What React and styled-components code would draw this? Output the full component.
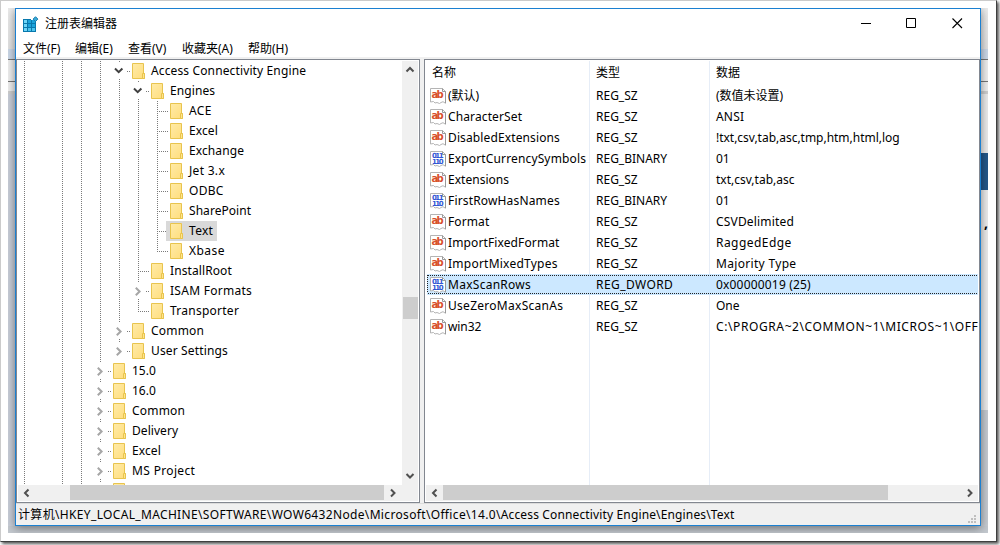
import React from "react";
import styled, { createGlobalStyle, css } from "styled-components";

const GlobalStyle = createGlobalStyle`
  * {
    box-sizing: border-box;
  }
  body {
    margin: 0;
    height: 545px;
    background: #fff;
    overflow: hidden;
    color: #000;
    font-family: "Noto Sans", "Noto Sans CJK SC", sans-serif;
    font-size: 12px;
    line-height: 20px;
  }
  svg {
    display: block;
    flex: none;
  }
`;

const Page = styled.div`
  height: 545px;
  overflow: hidden;
`;

const Frame = styled.div`
  width: 997px;
  height: 542px;
  padding: 7px 8px 8px 7px;
  border: 1px solid #cbcbcb;
  border-right-color: #3f3f3f;
  border-bottom-color: #3f3f3f;
  background: #fff;
  box-shadow: 2px 2px 3px #555;
`;

const Desktop = styled.div`
  display: grid;
  grid-template-columns: 7px 966px 7px;
  grid-template-rows: 518px 7px;
  width: 980px;
  height: 525px;
  overflow: hidden;
  background: #c3c8ce;
`;

const Strip = styled.div`
  display: flex;
  flex-direction: column;
  overflow: hidden;
`;

const Band = styled.div`
  flex: none;
  height: ${(p) => p.$h}px;
  background: ${(p) => p.$color};
  font-size: 14px;
  font-weight: 700;
  line-height: 14px;
  padding-left: 3px;
`;

const Window = styled.div`
  position: relative;
  display: flex;
  flex-direction: column;
  border: 1px solid #1b80d1;
  background: #fff;
  box-shadow: 0 2px 9px rgba(0, 0, 0, 0.45);
`;

const TitleBar = styled.div`
  display: flex;
  align-items: center;
  height: 29px;
  padding-left: 7px;
`;

const Title = styled.div`
  flex: 1;
  padding-left: 6px;
`;

const Controls = styled.div`
  display: flex;
  gap: 35px;
  padding-right: 17px;
`;

const MenuBar = styled.div`
  display: flex;
  height: 21px;
  padding: 1px 0 0 7px;
  border-bottom: 2px solid #f0f0f0;
`;

const MenuItem = styled.div`
  width: ${(p) => p.$w}px;
  line-height: 20px;
  white-space: nowrap;
`;

const Body = styled.div`
  display: flex;
  gap: 4px;
  height: 444px;
  background: #f0f0f0;
`;

const Pane = styled.div`
  display: flex;
  flex-direction: column;
  flex: none;
  width: ${(p) => p.$w}px;
  padding: 1px;
  border: 1px solid #828790;
  background: #fff;
  overflow: hidden;
`;

const TreeArea = styled.div`
  display: flex;
  height: 424px;
`;

const Tree = styled.div`
  flex: 1;
  overflow: hidden;
`;

const TreeRow = styled.div`
  display: flex;
  height: 20px;
`;

const TreeLabel = styled.div`
  display: flex;
  align-items: center;
  gap: 6px;
  margin-left: -4px;
  padding: 0 4px;
  letter-spacing: ${(p) => p.$ls ?? 0.1}px;
  white-space: nowrap;
  ${(p) =>
    p.$selected &&
    css`
      background: #d9d9d9;
    `}
`;

const VScroll = styled.div`
  display: flex;
  flex-direction: column;
  justify-content: space-between;
  align-items: center;
  width: 16px;
  padding: 4px 0;
  background: #f0f0f0;
`;

const VThumb = styled.div`
  width: 15px;
  height: 22px;
  margin-top: 202px;
  margin-bottom: 132px;
  background: #cdcdcd;
`;

const HScroll = styled.div`
  display: flex;
  height: 16px;
  background: #f0f0f0;
`;

const HButton = styled.div`
  display: flex;
  align-items: center;
  justify-content: center;
  width: 17px;
  height: 15px;
`;

const HThumb = styled.div`
  width: ${(p) => p.$w}px;
  height: 15px;
  margin-left: ${(p) => p.$left}px;
  margin-right: ${(p) => p.$right}px;
  background: #cdcdcd;
`;

const ListArea = styled.div`
  height: 424px;
  overflow: hidden;
  background: linear-gradient(#e6edf7, #e6edf7) 163px 0 / 1px 100% no-repeat,
    linear-gradient(#e6edf7, #e6edf7) 283px 0 / 1px 100% no-repeat;
`;

const ListHeader = styled.div`
  display: grid;
  grid-template-columns: 164px 120px 262px;
  align-items: center;
  height: 24px;
  padding-left: 6px;
`;

const ListRow = styled.div`
  display: grid;
  grid-template-columns: 166px 120px 262px;
  align-items: center;
  height: 21px;
  margin-left: 1px;
  padding-left: 3px;
  white-space: nowrap;
  ${(p) =>
    p.$selected &&
    css`
      background: repeating-linear-gradient(90deg, #222 0 1px, transparent 1px 2px) 1px 1px / 100% 1px no-repeat,
        repeating-linear-gradient(90deg, #222 0 1px, transparent 1px 2px) 1px 19px / 100% 1px no-repeat,
        repeating-linear-gradient(#222 0 1px, transparent 1px 2px) 0 1px / 1px 18px no-repeat,
        #cce8ff;
    `}
`;

const Cell = styled.div`
  display: flex;
  align-items: center;
  gap: 2px;
  letter-spacing: ${(p) => p.$ls || 0}px;
`;

const StatusBar = styled.div`
  display: flex;
  justify-content: space-between;
  align-items: flex-end;
  height: 22px;
  padding: 0 2px 0;
  border-top: 1px solid #dcdcdc;
  background: #f0f0f0;
  white-space: nowrap;
`;

const PathPart = styled.span`
  letter-spacing: ${(p) => p.$ls}px;
`;

const AppIcon = () => (
  <svg width="16" height="16" viewBox="0 0 16 16">
    <rect x="0" y="3" width="13" height="13" fill="#0878ad" />
    {[0, 1, 2].map((r) =>
      [0, 1, 2].map((c) => (
        <rect
          key={`${r}${c}`}
          x={c * 4 + 1}
          y={r * 4 + 4}
          width="3"
          height="3"
          fill={c === 0 ? "#6fd6f7" : r === 2 ? "#4cc4ee" : "#1ba3db"}
        />
      ))
    )}
    <path d="M8 2H15V7H13V4H8z" fill="#fff" />
    <path d="M12.5 0.7l2.4 2.4-2.4 2.4-2.4-2.4z" fill="#3aa9d8" stroke="#1a7fae" />
  </svg>
);

const ARROWS = {
  up: "M1.5 6.5L5 3L8.5 6.5",
  down: "M1.5 3L5 6.5L8.5 3",
  left: "M6.5 1.5L3 5L6.5 8.5",
  right: "M3 1.5L6.5 5L3 8.5",
};

const Arrow = ({ dir }) => (
  <svg width="10" height="10" viewBox="0 0 10 10">
    <path d={ARROWS[dir]} fill="none" stroke="#505050" strokeWidth="2" />
  </svg>
);

const FolderIcon = () => (
  <svg width="13" height="16" viewBox="0 0 13 16">
    <defs>
      <linearGradient id="folder" x1="0" y1="0" x2="1" y2="1">
        <stop offset="0" stopColor="#ffeba8" />
        <stop offset="1" stopColor="#ffdd7c" />
      </linearGradient>
    </defs>
    <path d="M.5 .5h11v10h1v5H.5z" fill="url(#folder)" stroke="#e8c44e" />
    <path d="M10.5 15.5v-5h2v5z" fill="#ffe48d" stroke="#e8c44e" />
  </svg>
);

// kind: line, tee, end, open, shut, shutEnd, blank
const Guide = ({ kind }) => {
  const node = kind === "open" || kind.startsWith("shut");
  const dots = { stroke: "#7a7a7a", strokeDasharray: "1 1", shapeRendering: "crispEdges" };
  return (
    <svg width="19" height="20" viewBox="0 0 19 20">
      {(kind === "line" || kind === "tee") && <path d="M6.5 0V20" {...dots} />}
      {kind === "end" && <path d="M6.5 0V11" {...dots} />}
      {node && <path d="M6.5 0V1" {...dots} />}
      {(kind === "open" || kind === "shut") && <path d="M6.5 18V19" {...dots} />}
      {(kind === "tee" || kind === "end") && <path d="M8 10.5H17" {...dots} />}
      {node && <path d="M14 10.5H17" {...dots} />}
      {kind === "open" && <path d="M2 7.5L5.7 11.2L9.4 7.5" fill="none" stroke="#404040" strokeWidth="2" />}
      {kind.startsWith("shut") && (
        <path d="M3.8 6.7L7.6 10.5L3.8 14.3" fill="none" stroke="#a6a6a6" strokeWidth="2" />
      )}
    </svg>
  );
};

const ValueIcon = ({ binary }) => (
  <svg width="16" height="16" viewBox="0 0 16 16">
    <path
      d="M.5 .5H12.5L15.5 3.5V15.3L13 13.7L11 14.5L9.5 15.5L7 14.5L5 15L3.5 13.5L.5 14z"
      fill="#fff"
      stroke="#b4b4b4"
    />
    <path d="M12.5 .5V3.5H15.5V15" fill="none" stroke="#999" />
    {binary ? (
      <g fill="#2f55d4" fontFamily="DejaVu Sans" fontWeight="700" fontSize="7" letterSpacing="0">
        <text x="2" y="7" textLength="11.5">011</text>
        <text x="2" y="13" textLength="11.5">110</text>
      </g>
    ) : (
      <text
        x="1.6"
        y="10"
        fill="#d8502c"
        fontFamily="DejaVu Sans"
        fontWeight="700"
        fontSize="10"
        letterSpacing="0"
        textLength="12"
      >
        ab
      </text>
    )}
  </svg>
);

const Grip = () => (
  <svg width="10" height="12" viewBox="0 0 10 12">
    {[[6, 2], [3, 5], [6, 5], [0, 8], [3, 8], [6, 8]].map(([x, y]) => (
      <rect key={`${x}-${y}`} x={x} y={y} width="2" height="2" fill="#bfbfbf" />
    ))}
  </svg>
);

const MENU = [
  ["文件(F)", 52],
  ["编辑(E)", 53],
  ["查看(V)", 54],
  ["收藏夹(A)", 66],
  ["帮助(H)", 50],
];

const ROOT = ["line", "blank", "line", "line"];

const TREE = [
  { guides: ["line", "open"], label: "Access Connectivity Engine", ls: 0.13 },
  { guides: ["line", "line", "open"], label: "Engines" },
  { guides: ["line", "line", "line", "tee"], label: "ACE", ls: 0.4 },
  { guides: ["line", "line", "line", "tee"], label: "Excel" },
  { guides: ["line", "line", "line", "tee"], label: "Exchange" },
  { guides: ["line", "line", "line", "tee"], label: "Jet 3.x", ls: 0.3 },
  { guides: ["line", "line", "line", "tee"], label: "ODBC", ls: 0.3 },
  { guides: ["line", "line", "line", "tee"], label: "SharePoint", ls: 0.05 },
  { guides: ["line", "line", "line", "tee"], label: "Text", ls: 0.3, selected: true },
  { guides: ["line", "line", "line", "end"], label: "Xbase", ls: 0.45 },
  { guides: ["line", "line", "tee"], label: "InstallRoot" },
  { guides: ["line", "line", "shut"], label: "ISAM Formats", ls: 0.27 },
  { guides: ["line", "line", "end"], label: "Transporter", ls: 0.25 },
  { guides: ["line", "shut"], label: "Common", ls: 0.2 },
  { guides: ["line", "shutEnd"], label: "User Settings", ls: 0.15 },
  { guides: ["shut"], label: "15.0", ls: 0 },
  { guides: ["shut"], label: "16.0", ls: 0 },
  { guides: ["shut"], label: "Common", ls: 0.2 },
  { guides: ["shut"], label: "Delivery", ls: 0.05 },
  { guides: ["shut"], label: "Excel" },
  { guides: ["shut"], label: "MS Project", ls: 0.35 },
  { guides: ["shut"], label: "" },
];

const VALUES = [
  { name: "(默认)", type: "REG_SZ", data: "(数值未设置)" },
  { name: "CharacterSet", type: "REG_SZ", data: "ANSI", nameLs: 0.12, dataLs: 0.2 },
  { name: "DisabledExtensions", type: "REG_SZ", data: "!txt,csv,tab,asc,tmp,htm,html,log", nameLs: 0.12, dataLs: -0.02 },
  { name: "ExportCurrencySymbols", type: "REG_BINARY", data: "01", nameLs: 0.14 },
  { name: "Extensions", type: "REG_SZ", data: "txt,csv,tab,asc", nameLs: 0.02 },
  { name: "FirstRowHasNames", type: "REG_BINARY", data: "01", nameLs: 0.16 },
  { name: "Format", type: "REG_SZ", data: "CSVDelimited", nameLs: 0.1, dataLs: 0.18 },
  { name: "ImportFixedFormat", type: "REG_SZ", data: "RaggedEdge", nameLs: 0.12, dataLs: 0.45 },
  { name: "ImportMixedTypes", type: "REG_SZ", data: "Majority Type", nameLs: 0.24, dataLs: 0.32 },
  { name: "MaxScanRows", type: "REG_DWORD", data: "0x00000019 (25)", nameLs: 0.27, typeLs: 0.42, dataLs: 0.18 },
  { name: "UseZeroMaxScanAs", type: "REG_SZ", data: "One", nameLs: 0.28 },
  { name: "win32", type: "REG_SZ", data: "C:\\PROGRA~2\\COMMON~1\\MICROS~1\\OFF", nameLs: -0.1, dataLs: 0.6 },
];

const ToolbarBands = () => (
  <>
    <Band $h={41} $color="linear-gradient(#ececec, #e2e2e2)" />
    <Band $h={10} $color="#ccd8e8" />
    <Band $h={1} $color="#777" />
    <Band $h={21} $color="#efefef" />
    <Band $h={1} $color="#777" />
    <Band $h={9} $color="#efefef" />
    <Band $h={3} $color="#cfcfcf" />
  </>
);

const App = () => {
  return (
    <Page>
      <GlobalStyle />
      <Frame>
        <Desktop>
          <Strip>
            <ToolbarBands />
            <Band $h={432} $color="#c9ced8" />
          </Strip>
          <Window>
            <TitleBar>
              <AppIcon />
              <Title>注册表编辑器</Title>
              <Controls>
                <svg width="11" height="11" viewBox="0 0 11 11">
                  <path d="M1 5.5H11" stroke="#000" />
                </svg>
                <svg width="11" height="11" viewBox="0 0 11 11">
                  <path d="M.5 .5H9.5V9.5H.5z" fill="none" stroke="#000" />
                </svg>
                <svg width="11" height="11" viewBox="0 0 11 11">
                  <path d="M.5 .5L10 10M10 .5L.5 10" stroke="#000" strokeWidth="1.1" />
                </svg>
              </Controls>
            </TitleBar>
            <MenuBar>
              {MENU.map(([label, w]) => (
                <MenuItem key={label} $w={w}>
                  {label}
                </MenuItem>
              ))}
            </MenuBar>
            <Body>
              <Pane $w={404}>
                <TreeArea>
                  <Tree>
                    {TREE.map((item, i) => (
                      <TreeRow key={i}>
                        {[...ROOT, ...item.guides].map((kind, k) => (
                          <Guide key={k} kind={kind} />
                        ))}
                        <TreeLabel $selected={item.selected} $ls={item.ls}>
                          <FolderIcon />
                          {item.label}
                        </TreeLabel>
                      </TreeRow>
                    ))}
                  </Tree>
                  <VScroll>
                    <Arrow dir="up" />
                    <VThumb />
                    <Arrow dir="down" />
                  </VScroll>
                </TreeArea>
                <HScroll>
                  <HButton>
                    <Arrow dir="left" />
                  </HButton>
                  <HThumb $w={314} $left={35} $right={0} />
                  <HButton>
                    <Arrow dir="right" />
                  </HButton>
                </HScroll>
              </Pane>
              <Pane $w={556}>
                <ListArea>
                  <ListHeader>
                    <Cell>名称</Cell>
                    <Cell>类型</Cell>
                    <Cell>数据</Cell>
                  </ListHeader>
                  {VALUES.map((v) => (
                    <ListRow key={v.name} $selected={v.name === "MaxScanRows"}>
                      <Cell $ls={v.nameLs}>
                        <ValueIcon binary={v.type !== "REG_SZ"} />
                        {v.name}
                      </Cell>
                      <Cell $ls={v.typeLs}>{v.type}</Cell>
                      <Cell $ls={v.dataLs}>{v.data}</Cell>
                    </ListRow>
                  ))}
                </ListArea>
                <HScroll>
                  <HButton>
                    <Arrow dir="left" />
                  </HButton>
                  <HThumb $w={445} $left={0} $right={73} />
                  <HButton>
                    <Arrow dir="right" />
                  </HButton>
                </HScroll>
              </Pane>
            </Body>
            <StatusBar>
              <div>
                <PathPart $ls={0.34}>
                  {"计算机\\HKEY_LOCAL_MACHINE\\SOFTWARE\\WOW6432Node\\Microsoft\\Office\\14.0\\"}
                </PathPart>
                <PathPart $ls={0.14}>{"Access Connectivity Engine\\Engines\\Text"}</PathPart>
              </div>
              <Grip />
            </StatusBar>
          </Window>
          <Strip>
            <ToolbarBands />
            <Band $h={59} $color="#ececec" />
            <Band $h={37} $color="#24588a" />
            <Band $h={26} $color="#ececec" />
            <Band $h={194} $color="#ececec">
              ,
            </Band>
            <Band $h={116} $color="#c6cbd1" />
          </Strip>
        </Desktop>
      </Frame>
    </Page>
  );
};

export default App;
